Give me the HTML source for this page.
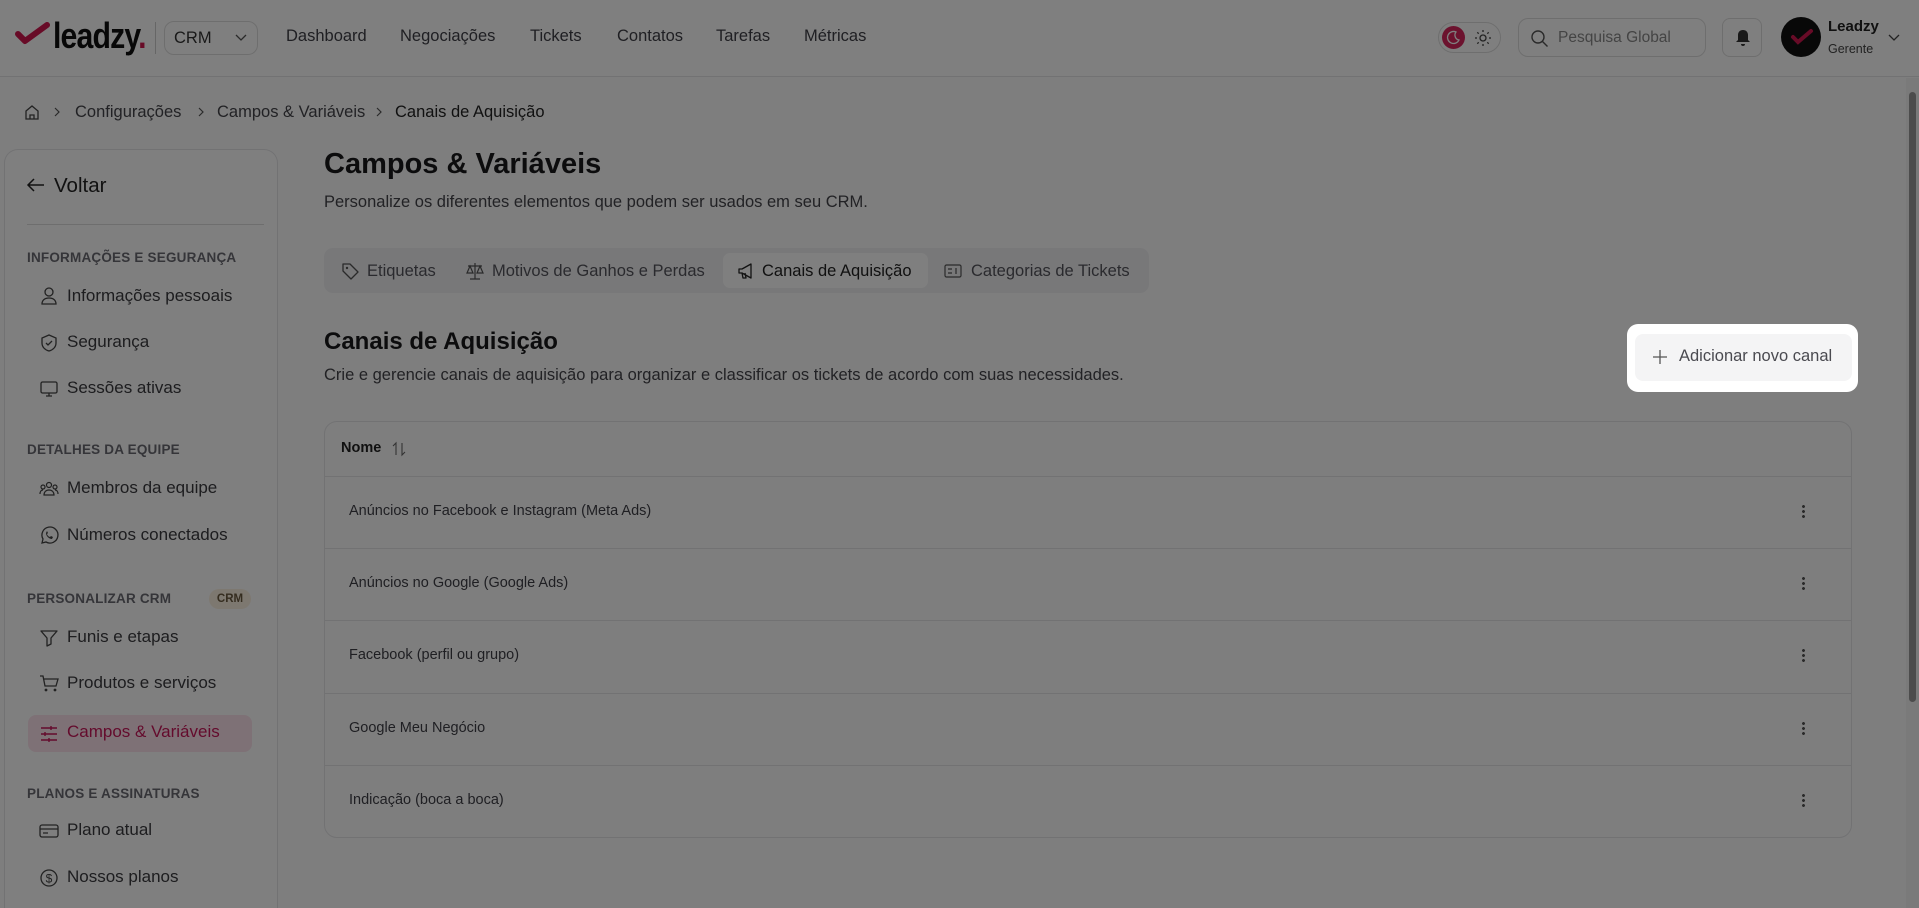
<!DOCTYPE html>
<html style="overflow:hidden;height:908px"><head><meta charset="utf-8"><style>
*{box-sizing:border-box;margin:0;padding:0}
body{width:1919px;height:908px;overflow:hidden;background:#fdfdfd;font-family:"Liberation Sans",sans-serif;color:#222;position:relative}
.abs{position:absolute}
.nav{font-size:16.5px;color:#3f3f46;top:27px}
.sb-label{position:absolute;left:27px;font-size:13.5px;font-weight:bold;color:#6b6b73;letter-spacing:.2px}
.sb-item{position:absolute;left:67px;font-size:17px;color:#3a3a3f}
.sb-ic{position:absolute;left:39px;width:20px;height:20px}
.row{position:absolute;left:324px;width:1528px;border-top:1px solid #e4e4e7;height:72px}
.row span{position:absolute;left:25px;top:26px;font-size:14.5px;color:#3f3f46}
.row i{position:absolute;left:1478px;top:27px;width:3px;height:15px;background:radial-gradient(circle,#555 1.3px,transparent 1.6px) 0 0/3px 5px repeat-y}
.tab{position:absolute;top:262px;font-size:16.5px;color:#55555c}
svg{overflow:visible}
</style></head><body>
<div class="abs" style="left:0;top:0;width:1919px;height:77px;border-bottom:1px solid #e4e4e7;background:#fff"></div>
<svg class="abs" style="left:16px;top:22px" width="34" height="22"><path d="M2 12 L9 19 L31 3" stroke="#d0164f" stroke-width="6" fill="none" stroke-linecap="round" stroke-linejoin="round"/></svg>
<div class="abs" style="left:53px;top:15px;font-size:36px;font-weight:bold;color:#111;letter-spacing:-1px;transform:scaleX(.84);transform-origin:left">leadzy<span style="color:#d0164f">.</span></div>
<div class="abs" style="left:155px;top:22px;width:1px;height:32px;background:#ccc"></div>
<div class="abs" style="left:164px;top:21px;width:94px;height:34px;border:1px solid #ddd;border-radius:10px"><span class="abs" style="left:9px;top:7px;font-size:16.5px;color:#333">CRM</span><svg class="abs" style="left:70px;top:12px" width="12" height="8"><path d="M1 1l5 5 5-5" stroke="#555" fill="none" stroke-width="1.3"/></svg></div>
<div class="abs nav" style="left:286px">Dashboard</div>
<div class="abs nav" style="left:400px">Negociações</div>
<div class="abs nav" style="left:530px">Tickets</div>
<div class="abs nav" style="left:617px">Contatos</div>
<div class="abs nav" style="left:716px">Tarefas</div>
<div class="abs nav" style="left:804px">Métricas</div>
<div class="abs" style="left:1438px;top:22px;width:63px;height:31px;border:1px solid #ddd;border-radius:16px"><div class="abs" style="left:3px;top:3px;width:23px;height:23px;border-radius:50%;background:#d8245c"></div><svg class="abs" style="left:8px;top:8px" width="13" height="13"><path d="M9 1a6 6 0 1 0 3 8 5 5 0 0 1-3-8z" stroke="#fff" fill="none" stroke-width="1.3"/></svg><svg class="abs" style="left:36px;top:7px" width="16" height="16"><circle cx="8" cy="8" r="3" stroke="#444" fill="none" stroke-width="1.3"/><path d="M8 0v2M8 14v2M0 8h2M14 8h2M2.3 2.3l1.4 1.4M12.3 12.3l1.4 1.4M2.3 13.7l1.4-1.4M12.3 3.7l1.4-1.4" stroke="#444" stroke-width="1.3"/></svg></div>
<div class="abs" style="left:1518px;top:18px;width:188px;height:39px;border:1px solid #ddd;border-radius:10px"><svg class="abs" style="left:12px;top:11px" width="17" height="17"><circle cx="7" cy="7" r="6" stroke="#555" fill="none" stroke-width="1.4"/><path d="M11.5 11.5l5 5" stroke="#555" stroke-width="1.4"/></svg><span class="abs" style="left:39px;top:10px;font-size:15.5px;color:#888">Pesquisa Global</span></div>
<div class="abs" style="left:1722px;top:18px;width:40px;height:39px;border:1px solid #ddd;border-radius:8px"><svg class="abs" style="left:12px;top:10px" width="16" height="18"><path d="M8 1c-3 0-5 2-5 5v5l-2 2h14l-2-2V6c0-3-2-5-5-5z M6 15a2 2 0 0 0 4 0z" fill="#333"/></svg></div>
<div class="abs" style="left:1781px;top:17px;width:40px;height:40px;border-radius:50%;background:#111"><svg class="abs" style="left:10px;top:13px" width="22" height="14"><path d="M2 7l5 5L20 1" stroke="#d0164f" stroke-width="4" fill="none" stroke-linecap="round"/></svg></div>
<div class="abs" style="left:1828px;top:18px;font-size:15px;font-weight:bold;color:#222">Leadzy</div>
<div class="abs" style="left:1828px;top:42px;font-size:12.5px;color:#444">Gerente</div>
<svg class="abs" style="left:1888px;top:34px" width="12" height="7"><path d="M1 1l5 5 5-5" stroke="#444" fill="none" stroke-width="1.3"/></svg>
<div class="abs" style="left:1906px;top:78px;width:13px;height:830px;background:#f4f4f4"><div class="abs" style="left:3px;top:14px;width:7px;height:610px;background:#999;border-radius:4px"></div></div>
<svg class="abs" style="left:24px;top:104px" width="16" height="16"><path d="M2 7l6-5 6 5v8H2z M6 15v-4h4v4" stroke="#444" fill="none" stroke-width="1.3"/></svg>
<svg class="abs" style="left:54px;top:107px" width="6" height="10"><path d="M1 1l4 4-4 4" stroke="#555" fill="none" stroke-width="1.2"/></svg>
<div class="abs" style="left:75px;top:103px;font-size:16.5px;color:#44444a">Configurações</div>
<svg class="abs" style="left:198px;top:107px" width="6" height="10"><path d="M1 1l4 4-4 4" stroke="#555" fill="none" stroke-width="1.2"/></svg>
<div class="abs" style="left:217px;top:103px;font-size:16.5px;color:#44444a">Campos &amp; Variáveis</div>
<svg class="abs" style="left:376px;top:107px" width="6" height="10"><path d="M1 1l4 4-4 4" stroke="#555" fill="none" stroke-width="1.2"/></svg>
<div class="abs" style="left:395px;top:103px;font-size:16.5px;color:#222">Canais de Aquisição</div>
<div class="abs" style="left:4px;top:149px;width:274px;height:759px;border:1px solid #e4e4e7;border-bottom:none;border-radius:14px 14px 0 0;background:#fff"></div>
<svg class="abs" style="left:27px;top:178px" width="18" height="14"><path d="M17 7H2M7 1L1 7l6 6" stroke="#222" fill="none" stroke-width="1.5"/></svg>
<div class="abs" style="left:54px;top:174px;font-size:20.5px;color:#222">Voltar</div>
<div class="abs" style="left:27px;top:224px;width:237px;height:1px;background:#ddd"></div>
<div class="sb-label" style="top:250px">INFORMAÇÕES E SEGURANÇA</div>
<svg class="sb-ic" style="top:286px"><circle cx="10" cy="6" r="4" stroke="#444" fill="none" stroke-width="1.3"/><path d="M3 18c0-4 3-6 7-6s7 2 7 6z" stroke="#444" fill="none" stroke-width="1.3"/></svg>
<div class="sb-item" style="top:286px">Informações pessoais</div>
<svg class="sb-ic" style="top:333px"><path d="M10 2l7 3v5c0 4-3 7-7 8-4-1-7-4-7-8V5z M7 10l2 2 4-4" stroke="#444" fill="none" stroke-width="1.3"/></svg>
<div class="sb-item" style="top:332px">Segurança</div>
<svg class="sb-ic" style="top:379px"><rect x="2" y="3" width="16" height="11" rx="1.5" stroke="#444" fill="none" stroke-width="1.3"/><path d="M7 17h6M10 14v3" stroke="#444" stroke-width="1.3"/></svg>
<div class="sb-item" style="top:378px">Sessões ativas</div>
<div class="sb-label" style="top:442px">DETALHES DA EQUIPE</div>
<svg class="sb-ic" style="top:479px"><circle cx="10" cy="6" r="2.5" stroke="#444" fill="none" stroke-width="1.2"/><circle cx="4" cy="8" r="2" stroke="#444" fill="none" stroke-width="1.2"/><circle cx="16" cy="8" r="2" stroke="#444" fill="none" stroke-width="1.2"/><path d="M5 16c0-3 2-5 5-5s5 2 5 5zM1 15c0-2 1-4 3-4M19 15c0-2-1-4-3-4" stroke="#444" fill="none" stroke-width="1.2"/></svg>
<div class="sb-item" style="top:478px">Membros da equipe</div>
<svg class="sb-ic" style="top:526px"><path d="M3 17l1-4a8 8 0 1 1 3 3z" stroke="#444" fill="none" stroke-width="1.3"/><path d="M7 7c0 3 3 6 6 6l1-2-2-1-1 1c-1 0-3-2-3-3l1-1-1-2z" fill="#444"/></svg>
<div class="sb-item" style="top:525px">Números conectados</div>
<div class="sb-label" style="top:591px">PERSONALIZAR CRM</div>
<div class="abs" style="left:209px;top:589px;width:42px;height:20px;border-radius:10px;background:#fbf1e0;font-size:11.5px;font-weight:bold;color:#6b5a40;text-align:center;line-height:20px">CRM</div>
<svg class="sb-ic" style="top:628px"><path d="M2 3h16l-6 7v6l-4 2v-8z" stroke="#444" fill="none" stroke-width="1.3" stroke-linejoin="round"/></svg>
<div class="sb-item" style="top:627px">Funis e etapas</div>
<svg class="sb-ic" style="top:674px"><path d="M1 2h3l2 10h11l2-7H5" stroke="#444" fill="none" stroke-width="1.3"/><circle cx="7" cy="16" r="1.4" fill="#444"/><circle cx="16" cy="16" r="1.4" fill="#444"/></svg>
<div class="sb-item" style="top:673px">Produtos e serviços</div>
<div class="abs" style="left:28px;top:715px;width:224px;height:37px;border-radius:8px;background:#fde3ec"></div>
<svg class="sb-ic" style="top:724px"><path d="M2 4h16M2 10h16M2 16h16" stroke="#c8175a" stroke-width="1.4"/><path d="M12 2v4M6 8v4M10 14v4" stroke="#c8175a" stroke-width="1.4"/></svg>
<div class="sb-item" style="top:722px;color:#c8175a">Campos &amp; Variáveis</div>
<div class="sb-label" style="top:786px">PLANOS E ASSINATURAS</div>
<svg class="sb-ic" style="top:821px"><rect x="1" y="4" width="18" height="12" rx="2" stroke="#444" fill="none" stroke-width="1.3"/><path d="M1 8h18M4 12h5" stroke="#444" stroke-width="1.3"/></svg>
<div class="sb-item" style="top:820px">Plano atual</div>
<svg class="sb-ic" style="top:868px"><circle cx="10" cy="10" r="8" stroke="#444" fill="none" stroke-width="1.3"/><text x="10" y="14.5" font-size="12" text-anchor="middle" fill="#444" font-family="Liberation Sans">$</text></svg>
<div class="sb-item" style="top:867px">Nossos planos</div>
<div class="abs" style="left:324px;top:148px;font-size:29px;font-weight:bold;color:#18181b">Campos &amp; Variáveis</div>
<div class="abs" style="left:324px;top:193px;font-size:16.5px;color:#44444a">Personalize os diferentes elementos que podem ser usados em seu CRM.</div>
<div class="abs" style="left:324px;top:248px;width:825px;height:45px;border-radius:9px;background:#f1f1f3"></div>
<div class="abs" style="left:723px;top:253px;width:205px;height:35px;border-radius:7px;background:#fff"></div>
<svg class="abs" style="left:341px;top:262px" width="18" height="18"><path d="M2 2h7l8 8-7 7-8-8z" stroke="#555" fill="none" stroke-width="1.3" stroke-linejoin="round"/><circle cx="6" cy="6" r="1.2" fill="#555"/></svg>
<div class="tab" style="left:367px">Etiquetas</div>
<svg class="abs" style="left:466px;top:262px" width="18" height="18"><path d="M9 1v16M4 17h10M2 4h14M4 4l-3 7h6zM14 4l-3 7h6z" stroke="#555" fill="none" stroke-width="1.2"/></svg>
<div class="tab" style="left:492px">Motivos de Ganhos e Perdas</div>
<svg class="abs" style="left:737px;top:262px" width="18" height="18"><path d="M2 7v4h3l9 5V2L5 7zM5 11l1 5h3l-1-5" stroke="#222" fill="none" stroke-width="1.3" stroke-linejoin="round"/></svg>
<div class="tab" style="left:762px;color:#222">Canais de Aquisição</div>
<svg class="abs" style="left:944px;top:263px" width="18" height="16"><rect x="1" y="2" width="16" height="12" rx="1.5" stroke="#555" fill="none" stroke-width="1.2"/><path d="M4 6h4M4 10h4M12 5v6" stroke="#555" stroke-width="1.2"/></svg>
<div class="tab" style="left:971px">Categorias de Tickets</div>
<div class="abs" style="left:324px;top:328px;font-size:24px;font-weight:bold;color:#18181b">Canais de Aquisição</div>
<div class="abs" style="left:324px;top:366px;font-size:16.5px;color:#44444a">Crie e gerencie canais de aquisição para organizar e classificar os tickets de acordo com suas necessidades.</div>
<div class="abs" style="left:324px;top:421px;width:1528px;height:417px;border:1px solid #e4e4e7;border-radius:13px"></div>
<div class="abs" style="left:341px;top:440px;font-size:14.5px;font-weight:bold;color:#222">Nome</div>
<svg class="abs" style="left:392px;top:441px" width="14" height="16"><path d="M4 14V2L1 5M10 2v12l3-3" stroke="#666" fill="none" stroke-width="1.1"/></svg>
<div class="row" style="top:476px"><span>Anúncios no Facebook e Instagram (Meta Ads)</span><i></i></div>
<div class="row" style="top:548px"><span>Anúncios no Google (Google Ads)</span><i></i></div>
<div class="row" style="top:620px"><span>Facebook (perfil ou grupo)</span><i></i></div>
<div class="row" style="top:693px"><span>Google Meu Negócio</span><i></i></div>
<div class="row" style="top:765px"><span>Indicação (boca a boca)</span><i></i></div>
<div class="abs" style="left:0;top:0;width:1919px;height:908px;background:rgba(0,0,0,0.5)"></div>
<div class="abs" style="left:1627px;top:324px;width:231px;height:68px;background:#fff;border-radius:11px"></div>
<div class="abs" style="left:1635px;top:334px;width:217px;height:47px;background:#f4f4f5;border-radius:8px"></div>
<svg class="abs" style="left:1653px;top:350px" width="14" height="14"><path d="M7 0v14M0 7h14" stroke="#555" stroke-width="1.3"/></svg>
<div class="abs" style="left:1679px;top:347px;font-size:16.5px;color:#4a4a50">Adicionar novo canal</div>
</body></html>
